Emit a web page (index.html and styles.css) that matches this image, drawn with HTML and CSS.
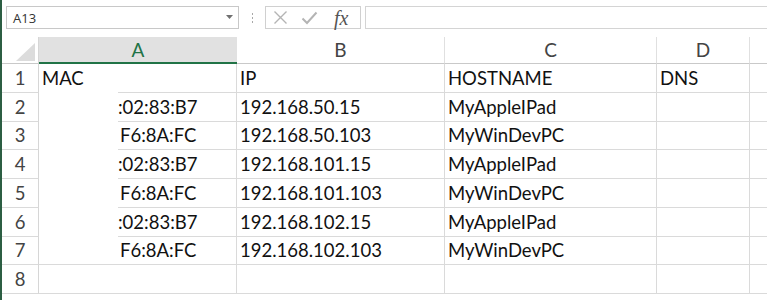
FILE: index.html
```html
<!DOCTYPE html>
<html>
<head>
<meta charset="utf-8">
<link rel="stylesheet" href="styles.css">
</head>
<body>
<div class="app">
  <div class="toolbar">
    <div class="namebox">
      <span class="ref">A13</span>
      <svg class="caret" width="7" height="4" viewBox="0 0 7 4"><path d="M0 0H7L3.5 4Z" fill="#707070"/></svg>
    </div>
    <div class="grip"><i></i><i></i><i></i></div>
    <div class="fbtns">
      <svg class="ic" width="15" height="15" viewBox="0 0 15 15"><path d="M1.5 1.5L13.5 13.5M13.5 1.5L1.5 13.5" stroke="#b4b4b4" stroke-width="1.4" fill="none"/></svg>
      <svg class="ic" width="17" height="16" viewBox="0 0 17 16"><path d="M1.5 8.5L6 13L15.5 2.5" stroke="#b4b4b4" stroke-width="2" fill="none"/></svg>
      <span class="fx">fx</span>
    </div>
    <div class="fbar"></div>
  </div>
  <div class="sheet">
    <div class="corner"><span class="tri"></span></div>
    <div class="ch sel">A</div>
    <div class="ch">B</div>
    <div class="ch">C</div>
    <div class="ch">D</div>
    <div class="ch last"></div>

    <div class="rh r29">1</div>
    <div class="c r29">MAC</div><div class="c r29">IP</div><div class="c r29">HOSTNAME</div><div class="c r29">DNS</div><div class="c r29 last"></div>

    <div class="rh r29">2</div>
    <div class="c r29 mac">:02:83:B7</div><div class="c r29">192.168.50.15</div><div class="c r29">MyAppleIPad</div><div class="c r29"></div><div class="c r29 last"></div>

    <div class="rh r28">3</div>
    <div class="c r28 mac m2">F6:8A:FC</div><div class="c r28">192.168.50.103</div><div class="c r28">MyWinDevPC</div><div class="c r28"></div><div class="c r28 last"></div>

    <div class="rh r29">4</div>
    <div class="c r29 mac">:02:83:B7</div><div class="c r29">192.168.101.15</div><div class="c r29">MyAppleIPad</div><div class="c r29"></div><div class="c r29 last"></div>

    <div class="rh r29">5</div>
    <div class="c r29 mac m2">F6:8A:FC</div><div class="c r29">192.168.101.103</div><div class="c r29">MyWinDevPC</div><div class="c r29"></div><div class="c r29 last"></div>

    <div class="rh r29">6</div>
    <div class="c r29 mac">:02:83:B7</div><div class="c r29">192.168.102.15</div><div class="c r29">MyAppleIPad</div><div class="c r29"></div><div class="c r29 last"></div>

    <div class="rh r28">7</div>
    <div class="c r28 mac m2">F6:8A:FC</div><div class="c r28">192.168.102.103</div><div class="c r28">MyWinDevPC</div><div class="c r28"></div><div class="c r28 last"></div>

    <div class="rh r29">8</div>
    <div class="c r29"></div><div class="c r29"></div><div class="c r29"></div><div class="c r29"></div><div class="c r29 last"></div>

    <div class="redact"></div>
  </div>
</div>
</body>
</html>
```

FILE: styles.css
```css
* { box-sizing: border-box; }
html, body { margin: 0; padding: 0; background: #fff; }
body { width: 767px; height: 300px; overflow: hidden; font-family: Lato, "Open Sans", sans-serif; }

.app {
  height: 300px;
  border-left: 2px solid #2c5e43;
}

.toolbar {
  height: 37px;
  display: flex;
  align-items: flex-start;
  padding-top: 6px;
  padding-left: 4px;
  background: #fff;
}
.namebox {
  width: 233px;
  height: 23px;
  border: 1px solid #c8c8c8;
  display: flex;
  align-items: center;
  justify-content: space-between;
  padding: 0 5px 0 6px;
}
.ref { font-size: 13px; color: #333; font-family: "Open Sans", sans-serif; }
.caret { margin-bottom: 2px; }
.grip {
  width: 26px;
  height: 23px;
  display: flex;
  flex-direction: column;
  align-items: center;
  justify-content: center;
  gap: 2px;
}
.grip i { width: 1px; height: 2px; background: #a8a8a8; display: block; }
.fbtns {
  width: 96px;
  height: 23px;
  border: 1px solid #d0d0d0;
  display: flex;
  align-items: center;
  padding-left: 7px;
  gap: 13px;
}
.fx {
  font-family: "Liberation Serif", serif;
  font-style: italic;
  font-size: 20px;
  color: #555;
  line-height: 1;
  margin-left: 3px;
}
.fbar {
  flex: 1;
  height: 23px;
  margin-left: 4px;
  border-top: 1px solid #d4d4d4;
  border-bottom: 1px solid #d4d4d4;
  border-left: 1px solid #d4d4d4;
}

.sheet {
  position: relative;
  display: grid;
  grid-template-columns: 37px 198px 208px 212px 93px 1fr;
  grid-template-rows: 27px;
}
.corner {
  height: 27px;
  border-right: 1px solid #d6d6d6;
  border-bottom: 1px solid #c9c9c9;
  position: relative;
}
.tri {
  position: absolute;
  right: 3px;
  bottom: 2px;
  width: 0; height: 0;
  border-left: 19px solid transparent;
  border-bottom: 18px solid #dcdcdc;
}
.ch {
  height: 27px;
  border-right: 1px solid #e0e0e0;
  border-bottom: 1px solid #c9c9c9;
  display: flex;
  align-items: flex-end;
  justify-content: center;
  padding-bottom: 2px;
  font-size: 19px;
  line-height: 22px;
  color: #444;
}
.ch.sel {
  background: #e1e1e1;
  color: #217346;
  border-bottom: 2px solid #217346;
  border-right: none;
  padding-bottom: 1px;
}
.ch.last { border-right: none; }

.rh {
  border-right: 1px solid #d6d6d6;
  border-bottom: 1px solid #dadada;
  display: flex;
  align-items: flex-end;
  justify-content: center;
  padding-bottom: 4px;
  font-size: 18.5px;
  line-height: 20px;
  color: #444;
}
.c {
  border-right: 1px solid #dadada;
  border-bottom: 1px solid #dadada;
  display: flex;
  align-items: flex-end;
  padding: 0 0 4px 3px;
  font-size: 18.5px;
  line-height: 20px;
  color: #111;
  white-space: nowrap;
  overflow: hidden;
}
.c.last { border-right: none; }
.c.mac { padding-left: 79px; }
.c.mac.m2 { padding-left: 81px; }
.r29 { height: 29px; }
.r28 { height: 28px; }

.redact {
  position: absolute;
  left: 37px;
  top: 54px;
  width: 79px;
  height: 172px;
  background: #fff;
}
```
